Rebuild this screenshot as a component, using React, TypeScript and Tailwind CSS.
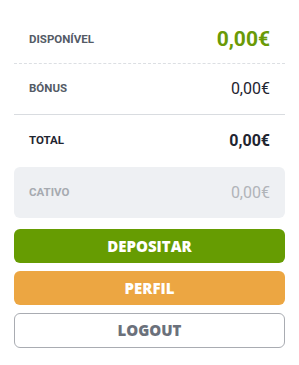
export default function App() {
  return (
    <div className="min-h-screen bg-white px-[14px] pt-[17px] font-['Roboto',sans-serif]">
      <div className="flex h-[47px] items-center justify-between border-b border-dashed border-[#dcdfe3] px-[15px]">
        <span className="text-[11.5px] font-bold text-[#545b66]">DISPONÍVEL</span>
        <span className="text-[21px] font-bold text-[#6a9a06]">0,00€</span>
      </div>
      <div className="flex h-[51px] items-center justify-between border-b border-[#d9dce0] px-[15px]">
        <span className="text-[11.5px] font-bold text-[#545b66]">BÓNUS</span>
        <span className="text-[16px] text-[#1f2530]">0,00€</span>
      </div>
      <div className="flex h-[52px] items-center justify-between px-[15px]">
        <span className="text-[11.5px] font-bold text-[#1f2530]">TOTAL</span>
        <span className="text-[16px] font-bold text-[#1f2530]">0,00€</span>
      </div>
      <div className="flex h-[51px] items-center justify-between rounded-md bg-[#eef0f3] px-[15px]">
        <span className="text-[11.5px] font-bold text-[#a6aab0]">CATIVO</span>
        <span className="text-[16px] text-[#b1b4b9]">0,00€</span>
      </div>
      <div className="mt-[11px] flex flex-col gap-[8px] font-['Open_Sans',sans-serif] text-[15px] font-extrabold">
        <button className="h-[34px] rounded-md bg-[#669c02] text-white">DEPOSITAR</button>
        <button className="h-[34px] rounded-md bg-[#eca642] text-white">PERFIL</button>
        <button className="h-[35px] rounded-md border border-[#a9acb2] bg-white text-[#6b717b]">LOGOUT</button>
      </div>
    </div>
  );
}
